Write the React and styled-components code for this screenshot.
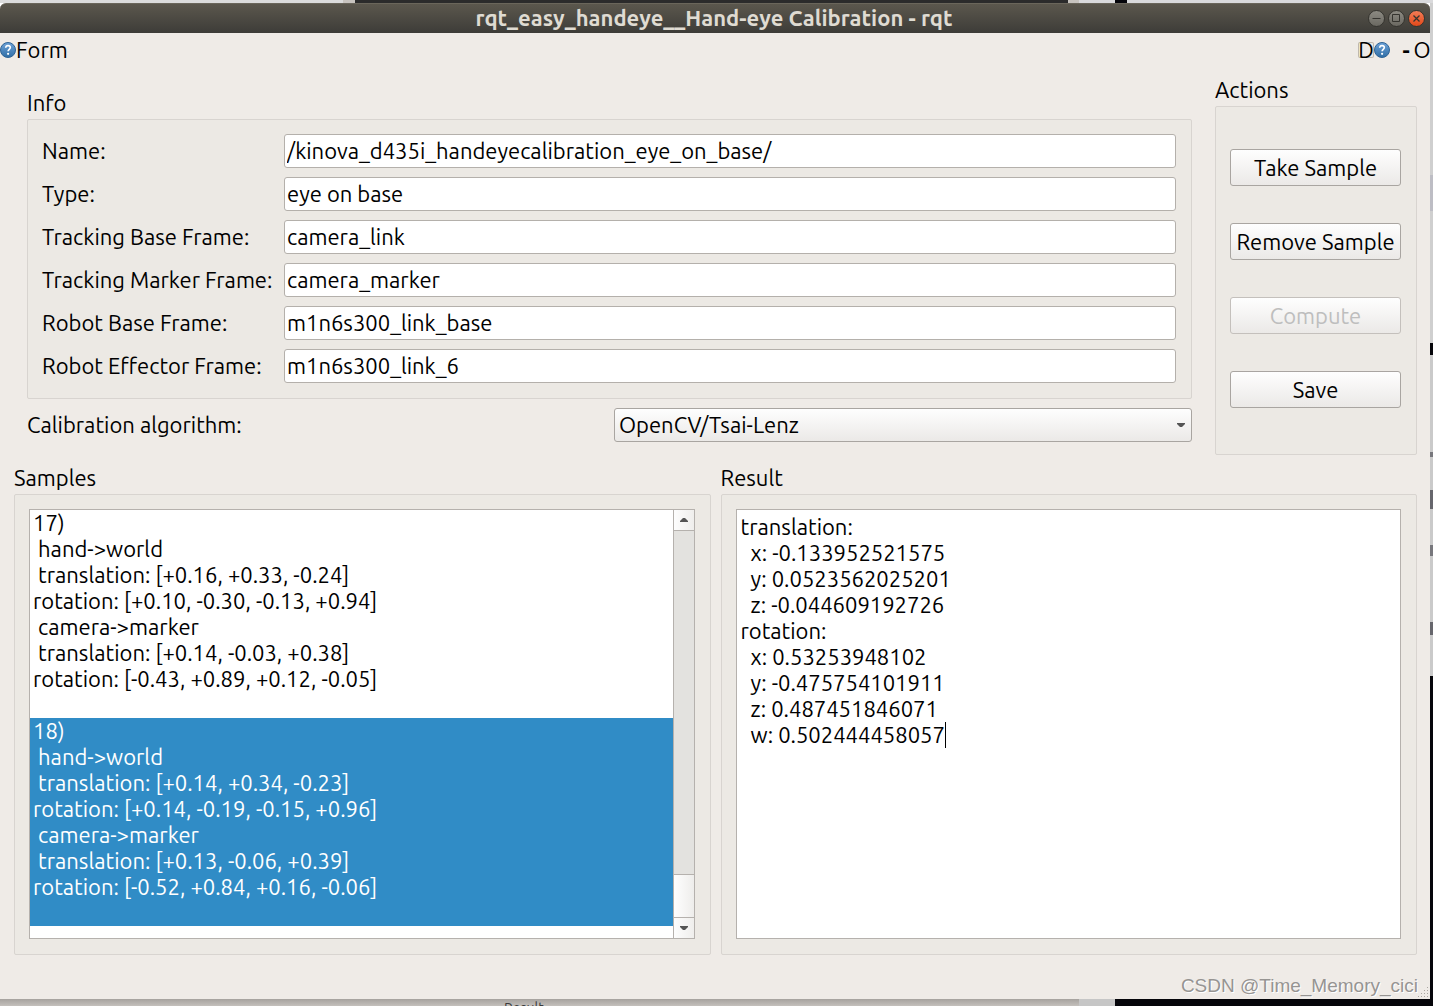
import React from 'react';
import styled, { createGlobalStyle, css } from 'styled-components';

const GlobalStyle = createGlobalStyle`
  * {
    box-sizing: border-box;
  }

  body {
    margin: 0;
    font-family: Ubuntu, 'Noto Sans', sans-serif;
    font-size: 22px;
    line-height: 26px;
    color: #000;
  }

  button, input, select, textarea {
    font: inherit;
    color: inherit;
    margin: 0;
  }
`;

const Desktop = styled.div`
  display: grid;
  grid-template-columns: minmax(0, 1fr) 3px;
  grid-template-rows: 3px minmax(0, 1fr) 7px;
  min-height: 100vh;
  overflow: hidden;
`;

const TopStrip = styled.div`
  grid-column: 1 / -1;
  background: linear-gradient(
    90deg,
    #dcdcdc 0 343px, #c8c4bf 343px 355px, #2b2b2b 355px 1068px, #c8c4bf 1068px 1079px,
    #dadadc 1079px 1115px, #05050a 1115px 1127px, #dadadc 1127px
  );
`;

const SideStrip = styled.div`
  background: linear-gradient(
    180deg,
    #cfcfcf 0 172px, #bdbdc4 172px 208px, #cfcfcf 208px 340px, #05050a 340px 352px,
    #cacaca 352px 449px, #77777c 449px 454px, #cacaca 454px 487px, #66666c 487px 506px,
    #cacaca 506px 542px, #77777c 542px 553px, #cacaca 553px 619px, #66666c 619px 632px,
    #cacaca 632px 673px, #05050a 673px
  );
`;

const BottomStrip = styled.div`
  grid-column: 1 / -1;
  height: 7px;
  padding: 2px 0 0 504px;
  overflow: hidden;
  font-size: 14px;
  line-height: 14px;
  color: #3a3a3a;
  background:
    linear-gradient(90deg, transparent 0 1079px, #c6c6c6 1079px 1115px, #05050a 1115px),
    linear-gradient(180deg, #a6a29e, #c4c0bc);
`;

const Window = styled.main`
  display: flex;
  flex-direction: column;
  background: #efebe7;
  border-radius: 6px 6px 0 0;
`;

const TitleBar = styled.header`
  display: flex;
  align-items: center;
  height: 30px;
  padding: 0 5px;
  border-top: 1px solid #6a665b;
  border-radius: 6px 6px 0 0;
  background: linear-gradient(180deg, #5b574d, #3d3c38);
`;

const WindowTitle = styled.h1`
  flex: 1;
  margin: 0;
  padding: 0 0 2px 55px;
  font-size: 22px;
  font-weight: 700;
  text-align: center;
  color: #dfdbd2;
`;

const WindowControls = styled.div`
  display: flex;
  gap: 3px;
`;

const ControlButton = styled.button`
  display: flex;
  align-items: center;
  justify-content: center;
  width: 17px;
  height: 17px;
  padding: 0;
  border: 1px solid #35342f;
  border-radius: 50%;
  background: ${props => (props.$close ? 'linear-gradient(180deg, #f37c56, #e2491a)' : 'linear-gradient(180deg, #8c8a82, #6a6861)')};
  color: #35342f;
`;

const DockBar = styled.div`
  display: flex;
  align-items: center;
  height: 34px;
`;

const DockTitle = styled.span`
  flex: 1;
`;

const DockButton = styled.button`
  display: flex;
  align-items: center;
  justify-content: center;
  width: 16px;
  height: 16px;
  padding: 0;
  border: 0;
  border-radius: 2px;
  box-shadow: ${props => (props.$framed ? 'inset 0 0 0 1px #bfb8ae' : 'none')};
  background: none;
  line-height: 16px;
  font-weight: ${props => (props.$bold ? 700 : 400)};
`;

const DockSpacer = styled.span`
  width: 8px;
`;

const Body = styled.div`
  flex: 1;
  display: flex;
  flex-direction: column;
  gap: 10px;
  padding: 10px 13px 0 14px;
`;

const TopRow = styled.div`
  display: grid;
  grid-template-columns: minmax(0, 1fr) 202px;
  gap: 10px;
`;

const InfoColumn = styled.div`
  display: flex;
  flex-direction: column;
  gap: 9px;
  padding: 13px;
`;

const BottomRow = styled.div`
  flex: 1;
  display: grid;
  grid-template-columns: repeat(2, minmax(0, 1fr));
  gap: 10px;
`;

const Group = styled.section`
  display: flex;
  flex-direction: column;
  gap: 3px;
`;

const GroupTitle = styled.h2`
  margin: 0;
  font-size: 22px;
  font-weight: 400;
`;

const panel = css`
  flex: 1;
  border: 1px solid #d8d4d0;
  border-radius: 2px;
  background: #ece9e4;
`;

const Fields = styled.div`
  ${panel}
  display: grid;
  grid-template-columns: 233px minmax(0, 1fr);
  gap: 9px;
  align-items: center;
  padding: 14px 15px 15px 14px;

  label {
    white-space: nowrap;
  }
`;

const TextField = styled.input`
  width: 100%;
  height: 34px;
  padding: 0 2px 2px;
  border: 1px solid #b4b0ab;
  border-radius: 3px;
  background: #fff;
  outline: none;
`;

const AlgorithmRow = styled.div`
  display: grid;
  grid-template-columns: repeat(2, minmax(0, 1fr));
  gap: 9px;
  align-items: center;
`;

const SelectBox = styled.div`
  position: relative;

  svg {
    position: absolute;
    top: 15px;
    right: 7px;
    pointer-events: none;
  }
`;

const Select = styled.select`
  display: block;
  width: 100%;
  height: 34px;
  padding: 0 24px 0 4px;
  border: 1px solid #a9a5a1;
  border-radius: 3px;
  background: linear-gradient(180deg, #fefefe, #ebe9e7);
  appearance: none;
`;

const ActionsPanel = styled.div`
  ${panel}
  display: flex;
  flex-direction: column;
  gap: 37px;
  padding: 42px 15px 46px 14px;
`;

const ActionButton = styled.button`
  height: 37px;
  padding: 0;
  border: 1px solid #a9a5a1;
  border-radius: 3px;
  background: linear-gradient(180deg, #fefefe, #ebe9e7);
  white-space: nowrap;

  &:disabled {
    border-color: #c4c0bc;
    color: #bebebe;
  }
`;

const ViewPanel = styled.div`
  ${panel}
  display: flex;
  padding: 14px 15px 15px 14px;
`;

const ListView = styled.div`
  flex: 1;
  display: flex;
  border: 1px solid #b5b1ad;
  background: #fff;
`;

const SampleList = styled.ul`
  flex: 1;
  margin: 0;
  padding: 0;
  list-style: none;
`;

const SampleItem = styled.li`
  height: 208px;
  padding: 0 3px;
  white-space: pre;
  background: ${props => (props.$selected ? '#308cc6' : '#fff')};
  color: ${props => (props.$selected ? '#fff' : '#000')};
`;

const ScrollBar = styled.div`
  display: flex;
  flex-direction: column;
  width: 21px;
  border-left: 1px solid #b5b1ad;
  background: #e3e2df;
`;

const ScrollButton = styled.button`
  display: flex;
  align-items: center;
  justify-content: center;
  height: 20px;
  padding: 0;
  border: 0;
  background: linear-gradient(90deg, #fdfdfd, #efeeec);
`;

const ScrollTrack = styled.div`
  flex: 1;
  display: flex;
  flex-direction: column;
  justify-content: flex-end;
  border: solid #b5b1ad;
  border-width: 1px 0;
`;

const ScrollThumb = styled.div`
  height: 43px;
  border-top: 1px solid #b5b1ad;
  background: linear-gradient(90deg, #fefefe, #eeedeb);
`;

const ResultView = styled.div`
  flex: 1;
  display: flex;
  position: relative;
`;

const ResultText = styled.textarea`
  flex: 1;
  padding: 4px;
  border: 1px solid #b5b1ad;
  background: #fff;
  outline: none;
  resize: none;
`;

const Caret = styled.span`
  position: absolute;
  top: 213px;
  left: 209px;
  width: 1px;
  height: 26px;
  background: #000;
`;

const Footer = styled.footer`
  display: flex;
  justify-content: flex-end;
  align-items: flex-end;
  height: 44px;
`;

const Watermark = styled.span`
  font-family: 'Liberation Sans', sans-serif;
  font-size: 19px;
  color: #969492;
  text-shadow: 1px 1px 0 #fff;
`;

const fields = [
  { id: 'name', label: 'Name:', value: '/kinova_d435i_handeyecalibration_eye_on_base/' },
  { id: 'type', label: 'Type:', value: 'eye on base' },
  { id: 'tracking-base', label: 'Tracking Base Frame:', value: 'camera_link' },
  { id: 'tracking-marker', label: 'Tracking Marker Frame:', value: 'camera_marker' },
  { id: 'robot-base', label: 'Robot Base Frame:', value: 'm1n6s300_link_base' },
  { id: 'robot-effector', label: 'Robot Effector Frame:', value: 'm1n6s300_link_6' },
];

const actions = [
  { label: 'Take Sample' },
  { label: 'Remove Sample' },
  { label: 'Compute', disabled: true },
  { label: 'Save' },
];

const samples = [
  `17)
 hand->world
 translation: [+0.16, +0.33, -0.24]
rotation: [+0.10, -0.30, -0.13, +0.94]
 camera->marker
 translation: [+0.14, -0.03, +0.38]
rotation: [-0.43, +0.89, +0.12, -0.05]`,
  `18)
 hand->world
 translation: [+0.14, +0.34, -0.23]
rotation: [+0.14, -0.19, -0.15, +0.96]
 camera->marker
 translation: [+0.13, -0.06, +0.39]
rotation: [-0.52, +0.84, +0.16, -0.06]`,
];

const result = `translation:
  x: -0.133952521575
  y: 0.0523562025201
  z: -0.044609192726
rotation:
  x: 0.53253948102
  y: -0.475754101911
  z: 0.487451846071
  w: 0.502444458057`;

function HelpIcon({ id }) {
  return (
    <svg width="16" height="16" viewBox="0 0 16 16" aria-hidden="true">
      <defs>
        <linearGradient id={id} x1="0" y1="0" x2="0" y2="1">
          <stop offset="0" stopColor="#6fa3d8" />
          <stop offset="1" stopColor="#2f6ea6" />
        </linearGradient>
      </defs>
      <circle cx="8" cy="8" r="7.5" fill={`url(#${id})`} stroke="#2f6496" />
      <path d="M5.7 5.8C5.8 4.3 6.8 3.6 8 3.6s2.3.8 2.3 2c0 1.7-2.2 1.8-2.2 3.7" fill="none" stroke="#fff" strokeWidth="1.6" />
      <circle cx="8.1" cy="11.8" r="1.1" fill="#fff" />
    </svg>
  );
}

function Arrow({ up }) {
  return (
    <svg width="8" height="4" viewBox="0 0 8 4" aria-hidden="true">
      <path d={up ? 'M0 4V3L3 0h2l3 3v1z' : 'M0 0h8v1L5 4H3L0 1z'} fill="#555" />
    </svg>
  );
}

function SizeGrip() {
  const dots = [[9, 0], [6, 3], [9, 3], [3, 6], [6, 6], [9, 6], [0, 9], [3, 9], [6, 9], [9, 9]];
  return (
    <svg width="12" height="12" viewBox="0 0 12 12" aria-hidden="true">
      {dots.map(([x, y]) => (
        <rect key={`${x}-${y}`} x={x} y={y} width="1" height="1" fill="#aaa6a1" />
      ))}
    </svg>
  );
}

function App() {
  return (
    <Desktop>
      <GlobalStyle />
      <TopStrip />
      <Window>
        <TitleBar>
          <WindowTitle>rqt_easy_handeye__Hand-eye Calibration - rqt</WindowTitle>
          <WindowControls>
            <ControlButton aria-label="Minimize">
              <svg width="15" height="15" viewBox="0 0 15 15"><path d="M3.5 7.5h8" stroke="currentColor" /></svg>
            </ControlButton>
            <ControlButton aria-label="Maximize">
              <svg width="15" height="15" viewBox="0 0 15 15"><path d="M3.5 3.5h7v7h-7z" fill="none" stroke="currentColor" /></svg>
            </ControlButton>
            <ControlButton $close aria-label="Close">
              <svg width="15" height="15" viewBox="0 0 15 15"><path d="M4.5 4.5l6 6M10.5 4.5l-6 6" stroke="currentColor" strokeWidth="1.3" /></svg>
            </ControlButton>
          </WindowControls>
        </TitleBar>

        <DockBar>
          <HelpIcon id="help-left" />
          <DockTitle>Form</DockTitle>
          <DockButton $framed>D</DockButton>
          <DockButton aria-label="Help"><HelpIcon id="help-right" /></DockButton>
          <DockSpacer />
          <DockButton $bold>-</DockButton>
          <DockButton>O</DockButton>
        </DockBar>

        <Body>
          <TopRow>
            <InfoColumn>
              <Group>
                <GroupTitle>Info</GroupTitle>
                <Fields>
                  {fields.map(field => (
                    <React.Fragment key={field.id}>
                      <label htmlFor={field.id}>{field.label}</label>
                      <TextField id={field.id} type="text" defaultValue={field.value} spellCheck={false} />
                    </React.Fragment>
                  ))}
                </Fields>
              </Group>
              <AlgorithmRow>
                <label htmlFor="algorithm">Calibration algorithm:</label>
                <SelectBox>
                  <Select id="algorithm">
                    <option>OpenCV/Tsai-Lenz</option>
                  </Select>
                  <Arrow />
                </SelectBox>
              </AlgorithmRow>
            </InfoColumn>
            <Group>
              <GroupTitle>Actions</GroupTitle>
              <ActionsPanel>
                {actions.map(action => (
                  <ActionButton key={action.label} disabled={action.disabled}>{action.label}</ActionButton>
                ))}
              </ActionsPanel>
            </Group>
          </TopRow>

          <BottomRow>
            <Group>
              <GroupTitle>Samples</GroupTitle>
              <ViewPanel>
                <ListView>
                  <SampleList>
                    {samples.map((sample, i) => (
                      <SampleItem key={sample} $selected={i === 1}>{sample}</SampleItem>
                    ))}
                  </SampleList>
                  <ScrollBar>
                    <ScrollButton aria-label="Scroll up"><Arrow up /></ScrollButton>
                    <ScrollTrack><ScrollThumb /></ScrollTrack>
                    <ScrollButton aria-label="Scroll down"><Arrow /></ScrollButton>
                  </ScrollBar>
                </ListView>
              </ViewPanel>
            </Group>
            <Group>
              <GroupTitle id="result-title">Result</GroupTitle>
              <ViewPanel>
                <ResultView>
                  <ResultText aria-labelledby="result-title" defaultValue={result} spellCheck={false} />
                  <Caret />
                </ResultView>
              </ViewPanel>
            </Group>
          </BottomRow>
        </Body>

        <Footer>
          <Watermark>CSDN @Time_Memory_cici</Watermark>
          <SizeGrip />
        </Footer>
      </Window>
      <SideStrip />
      <BottomStrip>Result</BottomStrip>
    </Desktop>
  );
}

export default App;
